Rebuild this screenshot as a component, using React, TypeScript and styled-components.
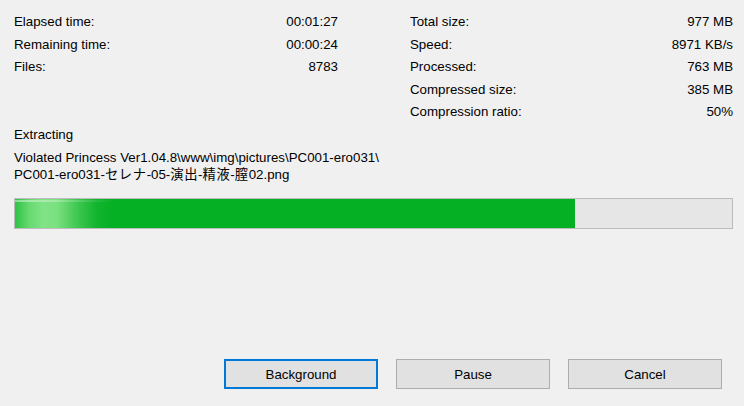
import React from "react";
import styled, { createGlobalStyle } from "styled-components";

const GlobalStyle = createGlobalStyle`
  html, body {
    margin: 0;
    padding: 0;
    background: #f0f0f0;
  }
  body {
    font-family: "Liberation Sans", Arial, "Noto Sans CJK JP", sans-serif;
    font-size: 13.3px;
    color: #000;
  }
`;

const Window = styled.div`
  width: 744px;
  height: 406px;
  box-sizing: border-box;
  padding: 11px 11px 17px 14px;
  display: flex;
  flex-direction: column;
  background: #f0f0f0;
`;

const Stats = styled.div`
  display: grid;
  grid-template-columns: 324px 323px;
  column-gap: 72px;
`;

const Column = styled.div`
  display: flex;
  flex-direction: column;
`;

const Row = styled.div`
  display: flex;
  justify-content: space-between;
  height: 22.5px;
  line-height: 22.5px;
  white-space: nowrap;
`;

const Status = styled.div`
  margin-top: 2px;
  line-height: 17px;
`;

const Path = styled.div`
  margin-top: 6px;
  line-height: 17px;
  font-family: "Liberation Sans", Arial, "Noto Sans CJK JP", sans-serif;
`;

const Wide = styled.span`
  letter-spacing: 0.6px;
`;

const Track = styled.div`
  margin-top: 15px;
  height: 31px;
  box-sizing: border-box;
  border: 1px solid #bcbcbc;
  background: #e6e6e6;
  overflow: hidden;
`;

const Fill = styled.div`
  height: 100%;
  background: linear-gradient(
    to right,
    #2fc246 0px,
    #66d96f 14px,
    #80e386 28px,
    #7be080 42px,
    #3fc852 62px,
    #12b42e 82px,
    #06b025 96px
  );
  position: relative;

  &::before {
    content: "";
    position: absolute;
    left: 0;
    top: 1px;
    height: 2px;
    width: 100px;
    background: linear-gradient(to right, rgba(255, 255, 255, 0.45), rgba(255, 255, 255, 0));
  }
`;

const Buttons = styled.div`
  margin-top: auto;
  display: flex;
  justify-content: flex-end;
  gap: 18px;
  padding-right: 11px;
`;

const Button = styled.button<{ $focused?: boolean }>`
  width: 154px;
  height: 30px;
  box-sizing: border-box;
  background: #e1e1e1;
  border: ${(p) => (p.$focused ? "2px solid #0078d7" : "1px solid #adadad")};
  font-family: "Liberation Sans", Arial, sans-serif;
  font-size: 13.3px;
  color: #000;
  padding: 0;
`;

const left = [
  ["Elapsed time:", "00:01:27"],
  ["Remaining time:", "00:00:24"],
  ["Files:", "8783"],
];

const right = [
  ["Total size:", "977 MB"],
  ["Speed:", "8971 KB/s"],
  ["Processed:", "763 MB"],
  ["Compressed size:", "385 MB"],
  ["Compression ratio:", "50%"],
];

export default function App() {
  const progress = 561 / 718;
  return (
    <>
      <GlobalStyle />
      <Window>
        <Stats>
          <Column>
            {left.map(([k, v]) => (
              <Row key={k}>
                <span>{k}</span>
                <span>{v}</span>
              </Row>
            ))}
          </Column>
          <Column>
            {right.map(([k, v]) => (
              <Row key={k}>
                <span>{k}</span>
                <span>{v}</span>
              </Row>
            ))}
          </Column>
        </Stats>
        <Status>Extracting</Status>
        <Path>
          Violated Princess Ver1.04.8\www\img\pictures\PC001-ero031\
          <br />
          PC001-ero031-<Wide>セレナ</Wide>-05-<Wide>演出</Wide>-<Wide>精液</Wide>-<Wide>膣</Wide>02.png
        </Path>
        <Track>
          <Fill style={{ width: `${progress * 100}%` }} />
        </Track>
        <Buttons>
          <Button $focused>Background</Button>
          <Button>Pause</Button>
          <Button>Cancel</Button>
        </Buttons>
      </Window>
    </>
  );
}
